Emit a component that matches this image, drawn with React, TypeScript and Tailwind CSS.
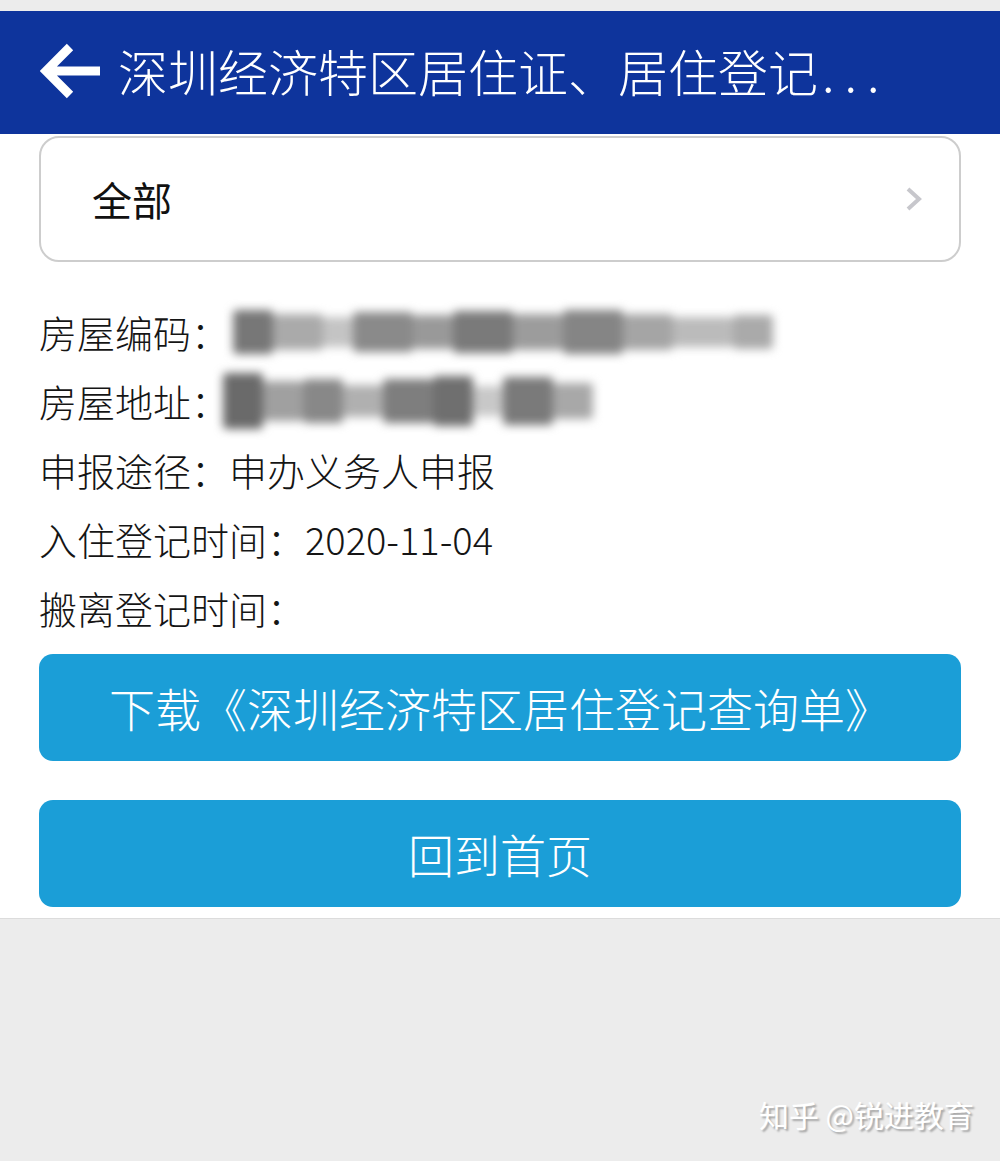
import React from "react";

const FONT = { fontFamily: '"Noto Sans CJK SC", "Noto Sans", sans-serif' };

// 模糊处理的遮挡块
function Smudge({ blocks }: { blocks: [number, number, string][] }) {
  return (
    <div className="flex items-center blur-[5px]">
      {blocks.map(([w, h, c], i) => (
        <div key={i} className="rounded-sm" style={{ width: w, height: h, background: c }} />
      ))}
    </div>
  );
}

function InfoRow({ label, value, children }: { label: string; value?: string; children?: React.ReactNode }) {
  return (
    <div className="flex h-[69px] items-center text-[38px] font-light text-[#151515]">
      <span>{label}：</span>
      {value && <span>{value}</span>}
      {children}
    </div>
  );
}

export default function App() {
  return (
    <div className="flex min-h-[1161px] w-[1000px] flex-col bg-[#ececec]" style={FONT}>
      <div className="h-[11px]" />
      {/* 顶部标题栏 */}
      <div className="flex h-[123px] items-center bg-[#0e349c] pl-[40px]">
        <svg width="62" height="56" viewBox="0 0 62 56" fill="none" className="-mt-[4px]">
          <path d="M60 28H8M30 4L6 28l24 24" stroke="white" strokeWidth="9" />
        </svg>
        <span className="ml-[16px] -mt-[6px] text-[50px] font-light leading-none text-white">
          深圳经济特区居住证、居住登记<span className="ml-[4px] tracking-[10px]">...</span>
        </span>
      </div>

      <div className="flex flex-col border-b border-[#dcdcdc] bg-white px-[39px] pb-[11px] pt-[2px]">
        <div className="flex h-[126px] items-center justify-between rounded-[20px] border-2 border-[#cdcdcd] pl-[51px] pr-[36px]">
          <span className="text-[40px] text-[#111]">全部</span>
          <svg width="18" height="26" viewBox="0 0 18 26" fill="none">
            <path d="M3 3l11 10L3 23" stroke="#c7c7cc" strokeWidth="4" />
          </svg>
        </div>

        <div className="mt-[35px] flex flex-col">
          <InfoRow label="房屋编码">
            <div className="ml-[4px]">
              <Smudge
                blocks={[
                  [40, 44, "#777"], [50, 36, "#aaa"], [30, 30, "#c4c4c4"], [60, 40, "#8a8a8a"],
                  [40, 34, "#999"], [60, 42, "#7a7a7a"], [50, 36, "#9c9c9c"], [60, 44, "#858585"],
                  [50, 36, "#a5a5a5"], [60, 30, "#bbb"], [40, 34, "#aaa"],
                ]}
              />
            </div>
          </InfoRow>
          <InfoRow label="房屋地址">
            <div className="-ml-[6px]">
              <Smudge
                blocks={[
                  [40, 56, "#6a6a6a"], [40, 40, "#a0a0a0"], [40, 44, "#888"], [40, 32, "#b0b0b0"],
                  [50, 44, "#7e7e7e"], [40, 50, "#6f6f6f"], [30, 30, "#c8c8c8"], [50, 48, "#7a7a7a"],
                  [40, 36, "#a8a8a8"],
                ]}
              />
            </div>
          </InfoRow>
          <InfoRow label="申报途径" value="申办义务人申报" />
          <InfoRow label="入住登记时间" value="2020-11-04" />
          <InfoRow label="搬离登记时间" />
        </div>

        <button className="mt-[12px] flex h-[107px] items-center justify-center rounded-[14px] bg-[#1b9ed7] text-[46px] font-light text-white">
          下载《深圳经济特区居住登记查询单》
        </button>
        <button className="mt-[39px] flex h-[107px] items-center justify-center rounded-[14px] bg-[#1b9ed7] text-[46px] font-light text-white">
          回到首页
        </button>
      </div>

      <div className="flex flex-1 items-end justify-end pb-[24px] pr-[26px]">
        <span className="text-[30px] text-white [text-shadow:2px_2px_2px_rgba(0,0,0,0.3)]">知乎 @锐进教育</span>
      </div>
    </div>
  );
}
